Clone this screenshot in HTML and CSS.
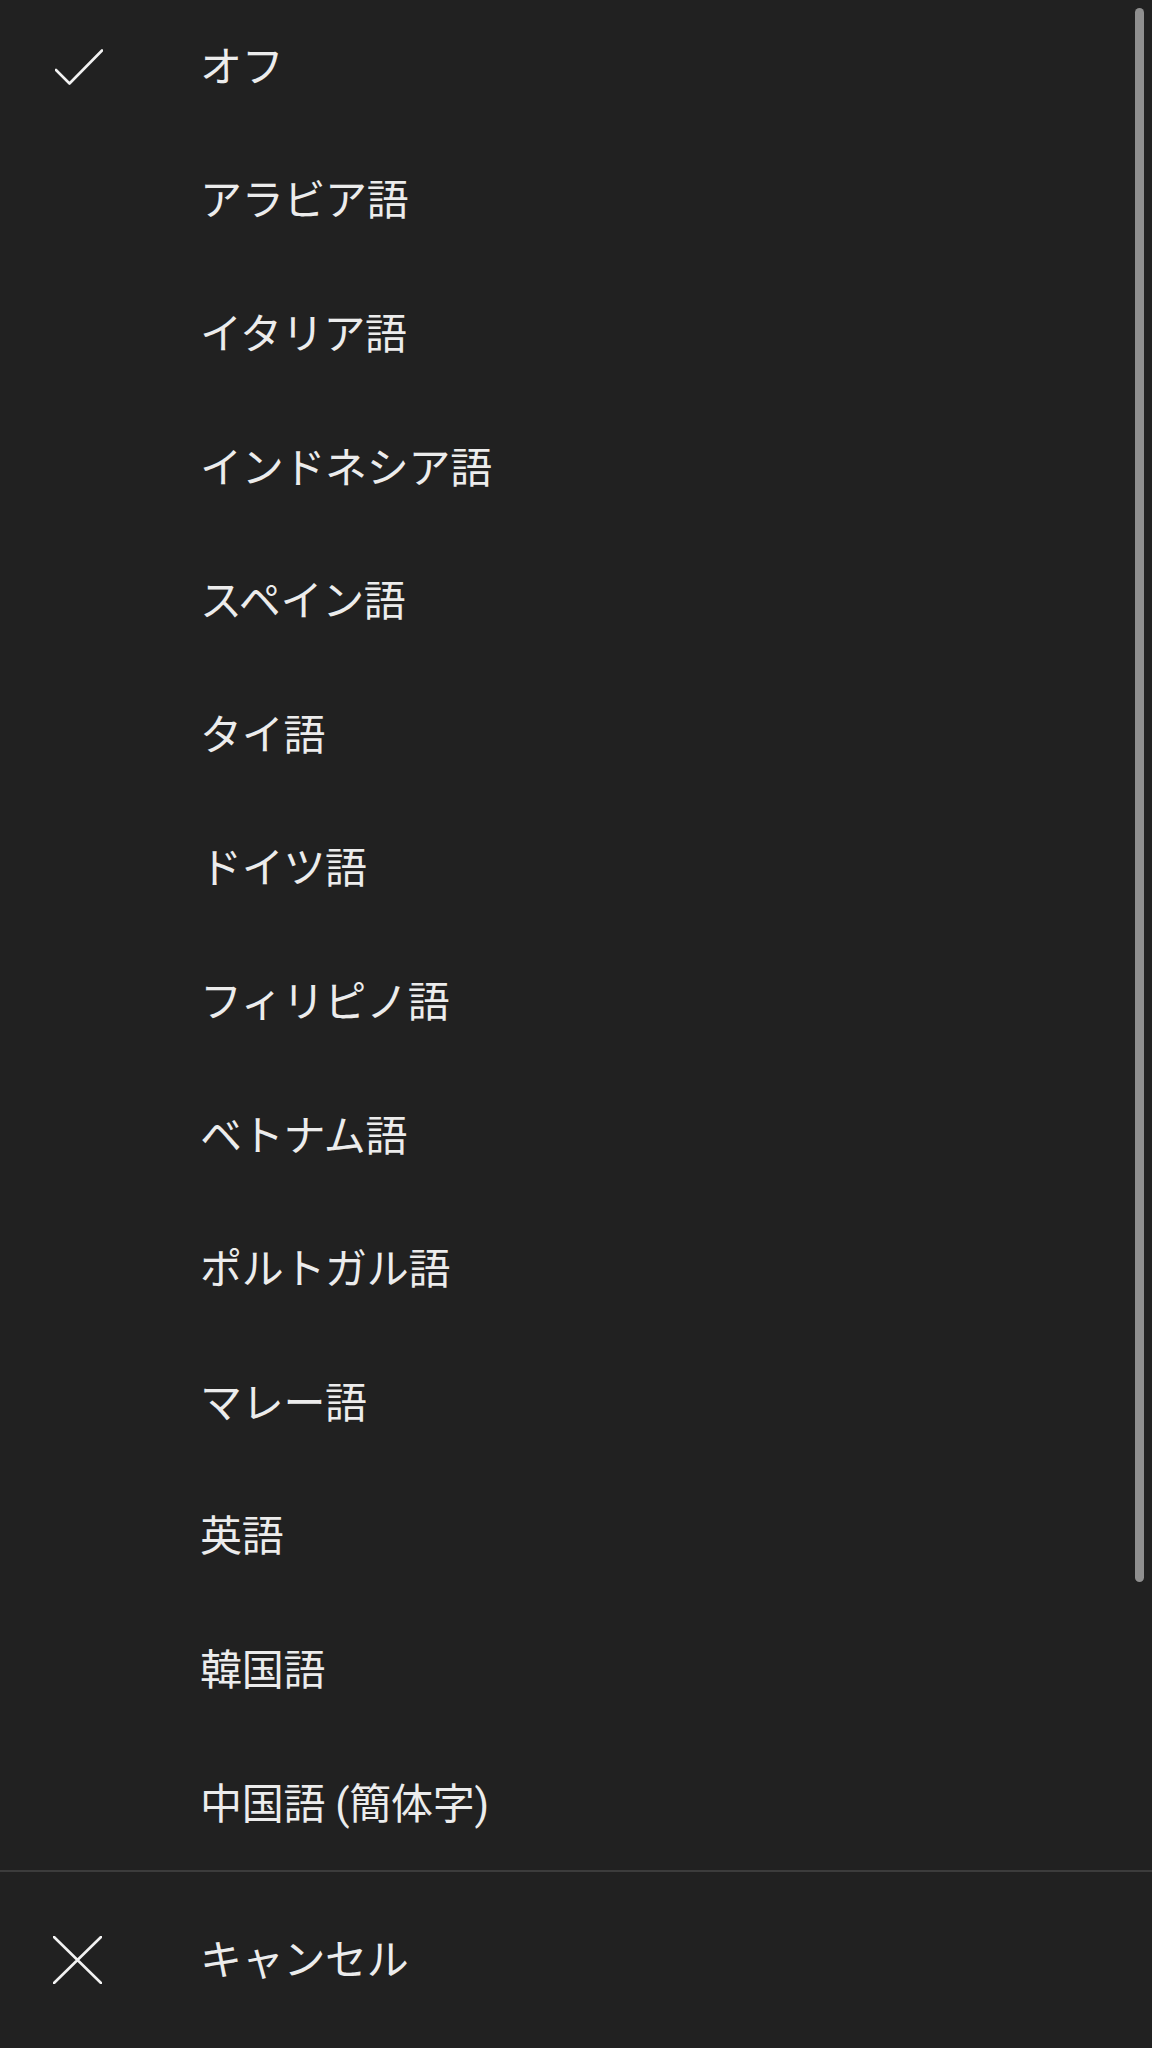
FILE: index.html
```html
<!DOCTYPE html>
<html lang="ja">
<head>
    <meta charset="UTF-8">
    <meta name="viewport" content="width=device-width, initial-scale=1.0">
    <title>字幕</title>
    <link rel="stylesheet" href="styles.css">
</head>
<body>

    <div id="sheet">
        <ul class="lang-list">
            <li class="item selected">
                <span class="icon">
                    <svg width="48" height="36" viewBox="0 0 48 36"><polyline points="1,21 14.5,34.5 47,1.5" /></svg>
                </span>
                <span class="label">オフ</span>
            </li>
            <li class="item"><span class="icon"></span><span class="label">アラビア語</span></li>
            <li class="item"><span class="icon"></span><span class="label">イタリア語</span></li>
            <li class="item"><span class="icon"></span><span class="label">インドネシア語</span></li>
            <li class="item"><span class="icon"></span><span class="label">スペイン語</span></li>
            <li class="item"><span class="icon"></span><span class="label">タイ語</span></li>
            <li class="item"><span class="icon"></span><span class="label">ドイツ語</span></li>
            <li class="item"><span class="icon"></span><span class="label">フィリピノ語</span></li>
            <li class="item"><span class="icon"></span><span class="label">ベトナム語</span></li>
            <li class="item"><span class="icon"></span><span class="label">ポルトガル語</span></li>
            <li class="item"><span class="icon"></span><span class="label">マレー語</span></li>
            <li class="item"><span class="icon"></span><span class="label">英語</span></li>
            <li class="item"><span class="icon"></span><span class="label">韓国語</span></li>
            <li class="item"><span class="icon"></span><span class="label">中国語 (簡体字)</span></li>
        </ul>

        <div class="item cancel">
            <span class="icon">
                <svg width="49" height="48" viewBox="0 0 49 48"><path d="M1 1 L48 47 M48 1 L1 47" /></svg>
            </span>
            <span class="label">キャンセル</span>
        </div>

        <!-- overlay scrollbar -->
        <div class="scroll-thumb"></div>
    </div>

</body>
</html>
```

FILE: styles.css
```css
html, body {
    margin: 0;
    padding: 0;
    background: #212121;
}

body {
    font-family: Roboto, "Noto Sans CJK JP", sans-serif;
    color: #ececec;
}

#sheet {
    position: relative;
    width: 1152px;
    height: 2048px;
    background: #212121;
}

.lang-list {
    list-style: none;
    margin: 0;
    padding: 0;
    border-bottom: 2px solid #3c3c3c;
}

.item {
    display: flex;
    align-items: center;
    height: 133.6px;
}

.icon {
    width: 145px;
    padding-left: 55px;
    display: flex;
    align-items: center;
}

.icon svg {
    fill: none;
    stroke: #f2f2f2;
    stroke-width: 2.6;
    stroke-linecap: round;
    stroke-linejoin: round;
}

.label {
    font-size: 42px;
    line-height: 1;
    letter-spacing: -0.3px;
    padding-top: 2px;
}

.item.cancel {
    height: 176px;
}

.item.cancel .icon {
    padding-left: 53px;
    width: 147px;
}

/* Thin scroll indicator on the right */
.scroll-thumb {
    position: absolute;
    top: 8px;
    left: 1135px;
    width: 9px;
    height: 1574px;
    border-radius: 5px;
    background: #8f8f8f;
}
```
